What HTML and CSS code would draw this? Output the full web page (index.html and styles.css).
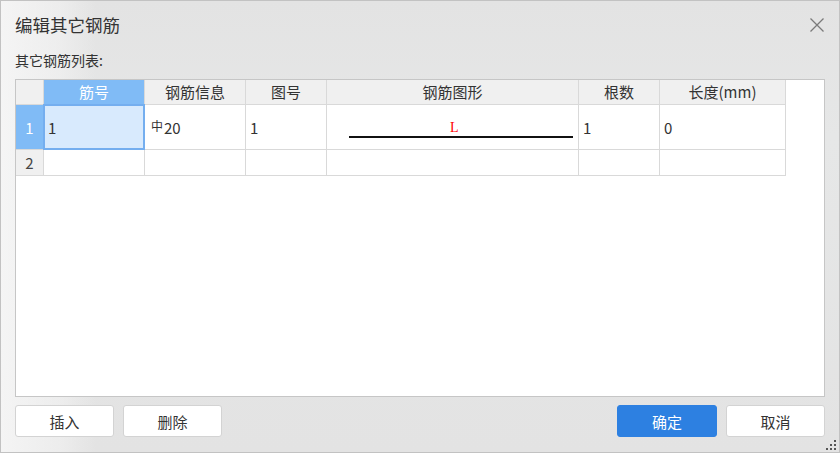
FILE: index.html
```html
<!DOCTYPE html>
<html lang="zh-CN">
<head>
<meta charset="utf-8">
<title>编辑其它钢筋</title>
<link rel="stylesheet" href="styles.css">
</head>
<body>
<div class="dialog">
  <header class="titlebar">
    <h1 class="title">编辑其它钢筋</h1>
    <button class="close" aria-label="关闭">
      <svg width="14" height="14" viewBox="0 0 14 14"><path d="M0.5 0.5 L13.5 13.5 M13.5 0.5 L0.5 13.5" stroke="#7a7a7a" stroke-width="1.3" fill="none"/></svg>
    </button>
  </header>
  <div class="caption">其它钢筋列表:</div>
  <div class="panel">
    <div class="sheet">
      <div class="hd corner"></div>
      <div class="hd on">筋号</div>
      <div class="hd">钢筋信息</div>
      <div class="hd">图号</div>
      <div class="hd">钢筋图形</div>
      <div class="hd">根数</div>
      <div class="hd">长度(mm)</div>

      <div class="rh on">1</div>
      <div class="cell sel">1</div>
      <div class="cell"><span class="grade">中</span>20</div>
      <div class="cell">1</div>
      <div class="cell shape">
        <span class="shape-label">L</span>
        <span class="shape-bar"></span>
      </div>
      <div class="cell">1</div>
      <div class="cell">0</div>

      <div class="rh">2</div>
      <div class="cell"></div>
      <div class="cell"></div>
      <div class="cell"></div>
      <div class="cell"></div>
      <div class="cell"></div>
      <div class="cell"></div>
    </div>
  </div>
  <footer class="footer">
    <div class="group">
      <button class="btn">插入</button>
      <button class="btn">删除</button>
    </div>
    <div class="group">
      <button class="btn primary">确定</button>
      <button class="btn">取消</button>
    </div>
  </footer>
  <svg class="grip" width="10" height="10" viewBox="0 0 10 10">
    <rect x="8" y="0" width="2" height="2" fill="#555"/>
    <rect x="4" y="4" width="2" height="2" fill="#555"/>
    <rect x="8" y="4" width="2" height="2" fill="#555"/>
    <rect x="0" y="8" width="2" height="2" fill="#555"/>
    <rect x="4" y="8" width="2" height="2" fill="#555"/>
    <rect x="8" y="8" width="2" height="2" fill="#555"/>
  </svg>
</div>
</body>
</html>
```

FILE: styles.css
```css
* {
  box-sizing: border-box;
}

html, body {
  margin: 0;
  padding: 0;
  background: #e4e4e4;
}

body {
  font-family: "Noto Sans CJK SC", "Noto Sans", sans-serif;
  color: #333;
}

.dialog {
  position: relative;
  width: 840px;
  height: 453px;
  border: 1px solid #c2c2c2;
  padding: 0 14px 15px 14px;
  display: flex;
  flex-direction: column;
  background:
    linear-gradient(90deg, rgba(250, 250, 250, 0.75) 0px, rgba(246, 246, 246, 0.5) 60px, rgba(228, 228, 228, 0) 95px),
    linear-gradient(180deg, #e3e3e3 0%, #e6e7e7 30%, #e3e3e3 100%);
}

/* title row */
.titlebar {
  height: 48px;
  display: flex;
  align-items: center;
  justify-content: space-between;
}

.title {
  margin: 0;
  font-size: 17.5px;
  font-weight: normal;
  color: #333;
  line-height: 1;
}

.close {
  width: 14px;
  height: 14px;
  padding: 0;
  margin-right: 1px;
  border: 0;
  background: none;
  display: flex;
}

.caption {
  height: 22px;
  line-height: 22px;
  font-size: 14px;
  color: #333;
}

/* table panel */
.panel {
  margin-top: 8px;
  height: 318px;
  background: #fff;
  border: 1px solid #c6c6c6;
}

.sheet {
  display: grid;
  grid-template-columns: 28px 101px 101px 81px 252px 81px 126px;
  grid-template-rows: 25px 45px 26px;
  width: max-content;
  margin: -1px 0 0 -1px;
  border-top: 1px solid #c6c6c6;
  border-left: 1px solid #c6c6c6;
  font-size: 15px;
}

.sheet > div {
  border-right: 1px solid #d9d9d9;
  border-bottom: 1px solid #d9d9d9;
}

.hd {
  background: #f0f0f0;
  text-align: center;
  line-height: 23px;
  color: #333;
  white-space: nowrap;
}

.hd.on {
  background: #80bbf6;
  color: #fff;
}

.rh {
  background: #f0f0f0;
  display: flex;
  align-items: center;
  justify-content: center;
  color: #444;
  font-size: 15px;
}

.rh.on {
  background: #80bbf6;
  color: #fff;
}

.cell {
  display: flex;
  align-items: center;
  padding-left: 4px;
  color: #333;
}

.cell.sel {
  position: relative;
  background: #d8eafd;
}

.cell.sel::after {
  content: "";
  position: absolute;
  top: -1px;
  left: -1px;
  right: -1px;
  bottom: -1px;
  border: 2px solid #74aeef;
}

.grade {
  font-size: 12px;
  position: relative;
  top: -2px;
  margin: 0 1px 0 2px;
}

/* straight bar drawing with its length mark */
.cell.shape {
  flex-direction: column;
  align-items: flex-start;
  justify-content: flex-start;
  padding: 0 0 0 22px;
}

.shape-label {
  font-family: "Liberation Serif", serif;
  font-size: 14px;
  line-height: 14px;
  color: #f00;
  margin-top: 16px;
  margin-left: 101px;
}

.shape-bar {
  width: 224px;
  height: 2px;
  margin-top: 1px;
  background: #111;
}

/* buttons */
.footer {
  margin-top: 8px;
  height: 32px;
  display: flex;
  justify-content: space-between;
}

.group {
  display: flex;
  gap: 9px;
}

.btn {
  width: 99px;
  height: 32px;
  padding: 0;
  border: 1px solid #d3d3d3;
  border-radius: 3px;
  background: #fff;
  font-family: "Noto Sans CJK SC", "Noto Sans", sans-serif;
  font-size: 15px;
  color: #333;
}

.btn.primary {
  background: #2d80e1;
  border-color: #2d80e1;
  color: #fff;
  width: 100px;
}

.grip {
  position: absolute;
  right: 3px;
  bottom: 2px;
}
```
